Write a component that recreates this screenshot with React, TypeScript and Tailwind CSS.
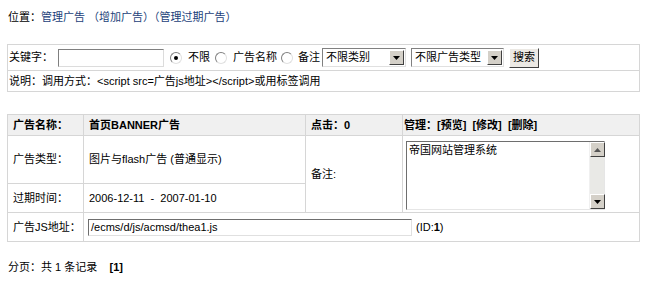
import React from 'react';

const font = "font-['Liberation_Sans','Noto_Sans_CJK_SC',sans-serif]";

const Radio = ({ checked }: { checked?: boolean }) => (
  <span className="inline-flex items-center justify-center w-[12px] h-[12px] rounded-full border border-t-[#808080] border-l-[#808080] border-b-[#e0e0e0] border-r-[#e0e0e0] bg-white">
    {checked && <span className="w-[4px] h-[4px] rounded-full bg-black" />}
  </span>
);

const ArrowBtn = ({ down = true }: { down?: boolean }) => (
  <span className="flex items-center justify-center w-[15px] h-[15px] bg-[#d4d0c8] border border-t-white border-l-white border-b-[#404040] border-r-[#404040]">
    <svg width="7" height="4" viewBox="0 0 7 4">
      {down ? <path d="M0 0h7L3.5 4z" fill="#000" /> : <path d="M0 4h7L3.5 0z" fill="#555" />}
    </svg>
  </span>
);

const Select = ({ label, width }: { label: string; width: string }) => (
  <span
    className={`inline-flex items-center justify-between h-[19px] ${width} bg-white border border-t-[#808080] border-l-[#808080] border-b-[#e0e0e0] border-r-[#e0e0e0] pl-[3px] pr-[1px]`}
  >
    <span className="leading-none whitespace-nowrap">{label}</span>
    <ArrowBtn />
  </span>
);

export default function App() {
  const cell = 'border border-[#d6d6d6] px-[5px] whitespace-nowrap';
  return (
    <div className={`w-[650px] h-[292px] bg-white text-[11px] text-black ${font}`}>
      <div className="pt-[10px] pl-[8px] h-[24px] leading-[14px]">
        位置：
        <span className="text-[#1c3f7a]">管理广告 （增加广告）（管理过期广告）</span>
      </div>

      <table className="mt-[20px] ml-[7px] w-[633px] border-collapse">
        <tbody>
          <tr className="h-[26px]">
            <td className="border border-[#d6d6d6] pl-[1px]">
              <div className="flex items-center whitespace-nowrap">
                <span className="w-[49px]">关键字：</span>
                <span className="w-[106px] h-[18px] bg-white border border-t-[#7f7f7f] border-l-[#7f7f7f] border-b-[#dcdcdc] border-r-[#dcdcdc]" />
                <span className="ml-[6px] flex items-center gap-[6px]">
                  <Radio checked />
                  <span>不限</span>
                </span>
                <span className="ml-[5px] flex items-center gap-[6px]">
                  <Radio />
                  <span>广告名称</span>
                </span>
                <span className="ml-[4px] flex items-center gap-[5px]">
                  <Radio />
                  <span>备注</span>
                </span>
                <span className="ml-[2px]">
                  <Select label="不限类别" width="w-[84px]" />
                </span>
                <span className="ml-[5px]">
                  <Select label="不限广告类型" width="w-[93px]" />
                </span>
                <span className="ml-[5px] inline-flex items-center justify-center h-[20px] w-[30px] bg-[#ece9e4] border border-t-white border-l-white border-b-[#404040] border-r-[#404040]">
                  搜索
                </span>
              </div>
            </td>
          </tr>
          <tr className="h-[21px]">
            <td className="border border-[#d6d6d6] pl-[1px]">
              说明：调用方式：&lt;script src=广告js地址&gt;&lt;/script&gt;或用标签调用
            </td>
          </tr>
        </tbody>
      </table>

      <table className="mt-[22px] ml-[7px] w-[633px] border-collapse table-fixed">
        <colgroup>
          <col className="w-[76px]" />
          <col className="w-[222px]" />
          <col className="w-[97px]" />
          <col />
        </colgroup>
        <tbody>
          <tr className="h-[21px] bg-[#f0f0f0] font-bold">
            <td className={cell}>广告名称：</td>
            <td className={cell}>首页BANNER广告</td>
            <td className={cell}>点击：0</td>
            <td className="border border-[#d6d6d6] pl-[1px] whitespace-nowrap">
              管理：[预览] &nbsp;[修改] &nbsp;[删除]
            </td>
          </tr>
          <tr className="h-[48px]">
            <td className={cell}>广告类型：</td>
            <td className={cell}>图片与flash广告 (普通显示)</td>
            <td className={`${cell} align-top pt-[30px]`} rowSpan={2}>
              备注:
            </td>
            <td className="border border-[#d6d6d6] pl-[3px] pt-[5px] pb-[2px] align-top" rowSpan={2}>
              <div className="flex w-[199px] h-[69px] border border-t-[#6e6e6e] border-l-[#6e6e6e] border-b-[#e6e6e6] border-r-[#e6e6e6] bg-[#f8f8f8]">
                <div className="flex-1 pl-[2px] pt-[1px] leading-[14px] bg-white">帝国网站管理系统</div>
                <div className="w-[15px] flex flex-col justify-between bg-[#e9e9e6] border-l border-[#f0f0f0]">
                  <ArrowBtn down={false} />
                  <ArrowBtn />
                </div>
              </div>
            </td>
          </tr>
          <tr className="h-[29px]">
            <td className={cell}>过期时间：</td>
            <td className={cell}>2006-12-11 &nbsp;- &nbsp;2007-01-10</td>
          </tr>
          <tr className="h-[29px]">
            <td className={cell}>广告JS地址：</td>
            <td className="border border-[#d6d6d6] pl-[4px]" colSpan={3}>
              <div className="flex items-center whitespace-nowrap">
                <span className="w-[324px] h-[17px] leading-[15px] pl-[2px] bg-white border border-t-[#6e6e6e] border-l-[#6e6e6e] border-b-[#e0e0e0] border-r-[#e0e0e0]">
                  /ecms/d/js/acmsd/thea1.js
                </span>
                <span className="ml-[4px]">
                  (ID:<b>1</b>)
                </span>
              </div>
            </td>
          </tr>
        </tbody>
      </table>

      <div className="mt-[18px] pl-[8px] leading-[14px]">
        分页：共 1 条记录 &nbsp;&nbsp; <b>[1]</b>
      </div>
    </div>
  );
}
